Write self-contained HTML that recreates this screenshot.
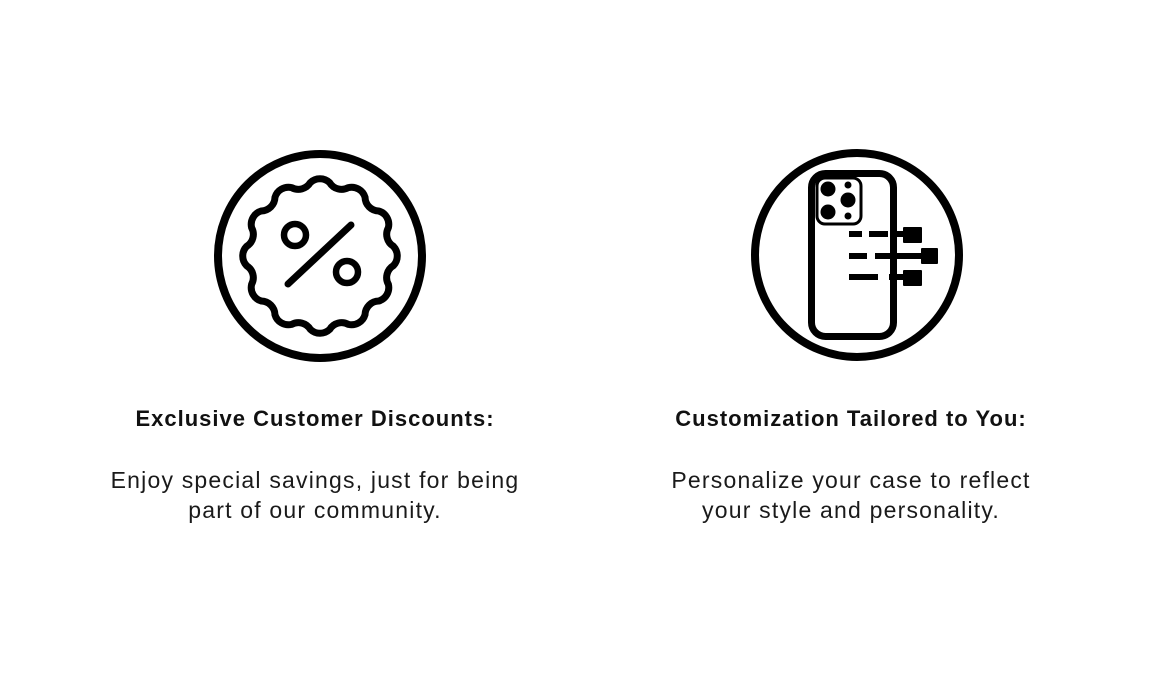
<!DOCTYPE html>
<html><head><meta charset="utf-8"><style>
html,body{margin:0;padding:0;background:#fff;width:1176px;height:674px;overflow:hidden;position:relative;font-family:"Liberation Sans",sans-serif;color:#111}
.t{position:absolute;width:560px;text-align:center;font-weight:bold;font-size:22px;line-height:30px;top:404px;letter-spacing:1px}
.b{position:absolute;width:560px;text-align:center;font-size:23px;line-height:30px;top:465px;color:#1a1a1a;letter-spacing:1.2px}
svg{position:absolute;left:0;top:0}
</style></head><body>
<svg width="1176" height="674" viewBox="0 0 1176 674">
<g fill="none" stroke="#000" stroke-linecap="round" stroke-linejoin="round">
<circle cx="320" cy="256" r="102" stroke-width="8"/>
<path transform="rotate(7.5 320 256)" stroke-width="7" d="M394,256 A14,14 0 0 0 391.5,275.2 A14,14 0 0 1 384.1,293 A14,14 0 0 0 372.3,308.3 A14,14 0 0 1 357,320.1 A14,14 0 0 0 339.2,327.5 A14,14 0 0 1 320,330 A14,14 0 0 0 300.8,327.5 A14,14 0 0 1 283,320.1 A14,14 0 0 0 267.7,308.3 A14,14 0 0 1 255.9,293 A14,14 0 0 0 248.5,275.2 A14,14 0 0 1 246,256 A14,14 0 0 0 248.5,236.8 A14,14 0 0 1 255.9,219 A14,14 0 0 0 267.7,203.7 A14,14 0 0 1 283,191.9 A14,14 0 0 0 300.8,184.5 A14,14 0 0 1 320,182 A14,14 0 0 0 339.2,184.5 A14,14 0 0 1 357,191.9 A14,14 0 0 0 372.3,203.7 A14,14 0 0 1 384.1,219 A14,14 0 0 0 391.5,236.8 A14,14 0 0 1 394,256 Z"/>
<circle cx="295" cy="235" r="11" stroke-width="6.5"/>
<circle cx="347" cy="272" r="11" stroke-width="6.5"/>
<line x1="288" y1="284" x2="351" y2="225" stroke-width="7"/>
<circle cx="857" cy="255" r="102" stroke-width="8"/>
<rect x="811.5" y="173.5" width="82" height="163" rx="14" stroke-width="7"/>
<rect x="817" y="178" width="44" height="46" rx="8" stroke-width="3"/>
</g>
<g fill="#000">
<circle cx="828" cy="189" r="7.5"/>
<circle cx="848" cy="200" r="7.5"/>
<circle cx="828" cy="212" r="7.5"/>
<circle cx="848" cy="185" r="3.5"/>
<circle cx="848" cy="216" r="3.5"/>
<rect x="849" y="231" width="13" height="6"/>
<rect x="869" y="231" width="19" height="6"/>
<rect x="897" y="231" width="8" height="6"/>
<rect x="903" y="227" width="19" height="16" rx="1"/>
<rect x="849" y="253" width="18" height="6"/>
<rect x="875" y="253" width="48" height="6"/>
<rect x="921" y="248" width="17" height="16" rx="1"/>
<rect x="849" y="274" width="29" height="6"/>
<rect x="889" y="274" width="15" height="6"/>
<rect x="903" y="270" width="19" height="16" rx="1"/>
</g>
</svg>
<div class="t" style="left:35px">Exclusive Customer Discounts:</div>
<div class="b" style="left:35px">Enjoy special savings, just for being<br>part of our community.</div>
<div class="t" style="left:571px">Customization Tailored to You:</div>
<div class="b" style="left:571px">Personalize your case to reflect<br>your style and personality.</div>
</body></html>
